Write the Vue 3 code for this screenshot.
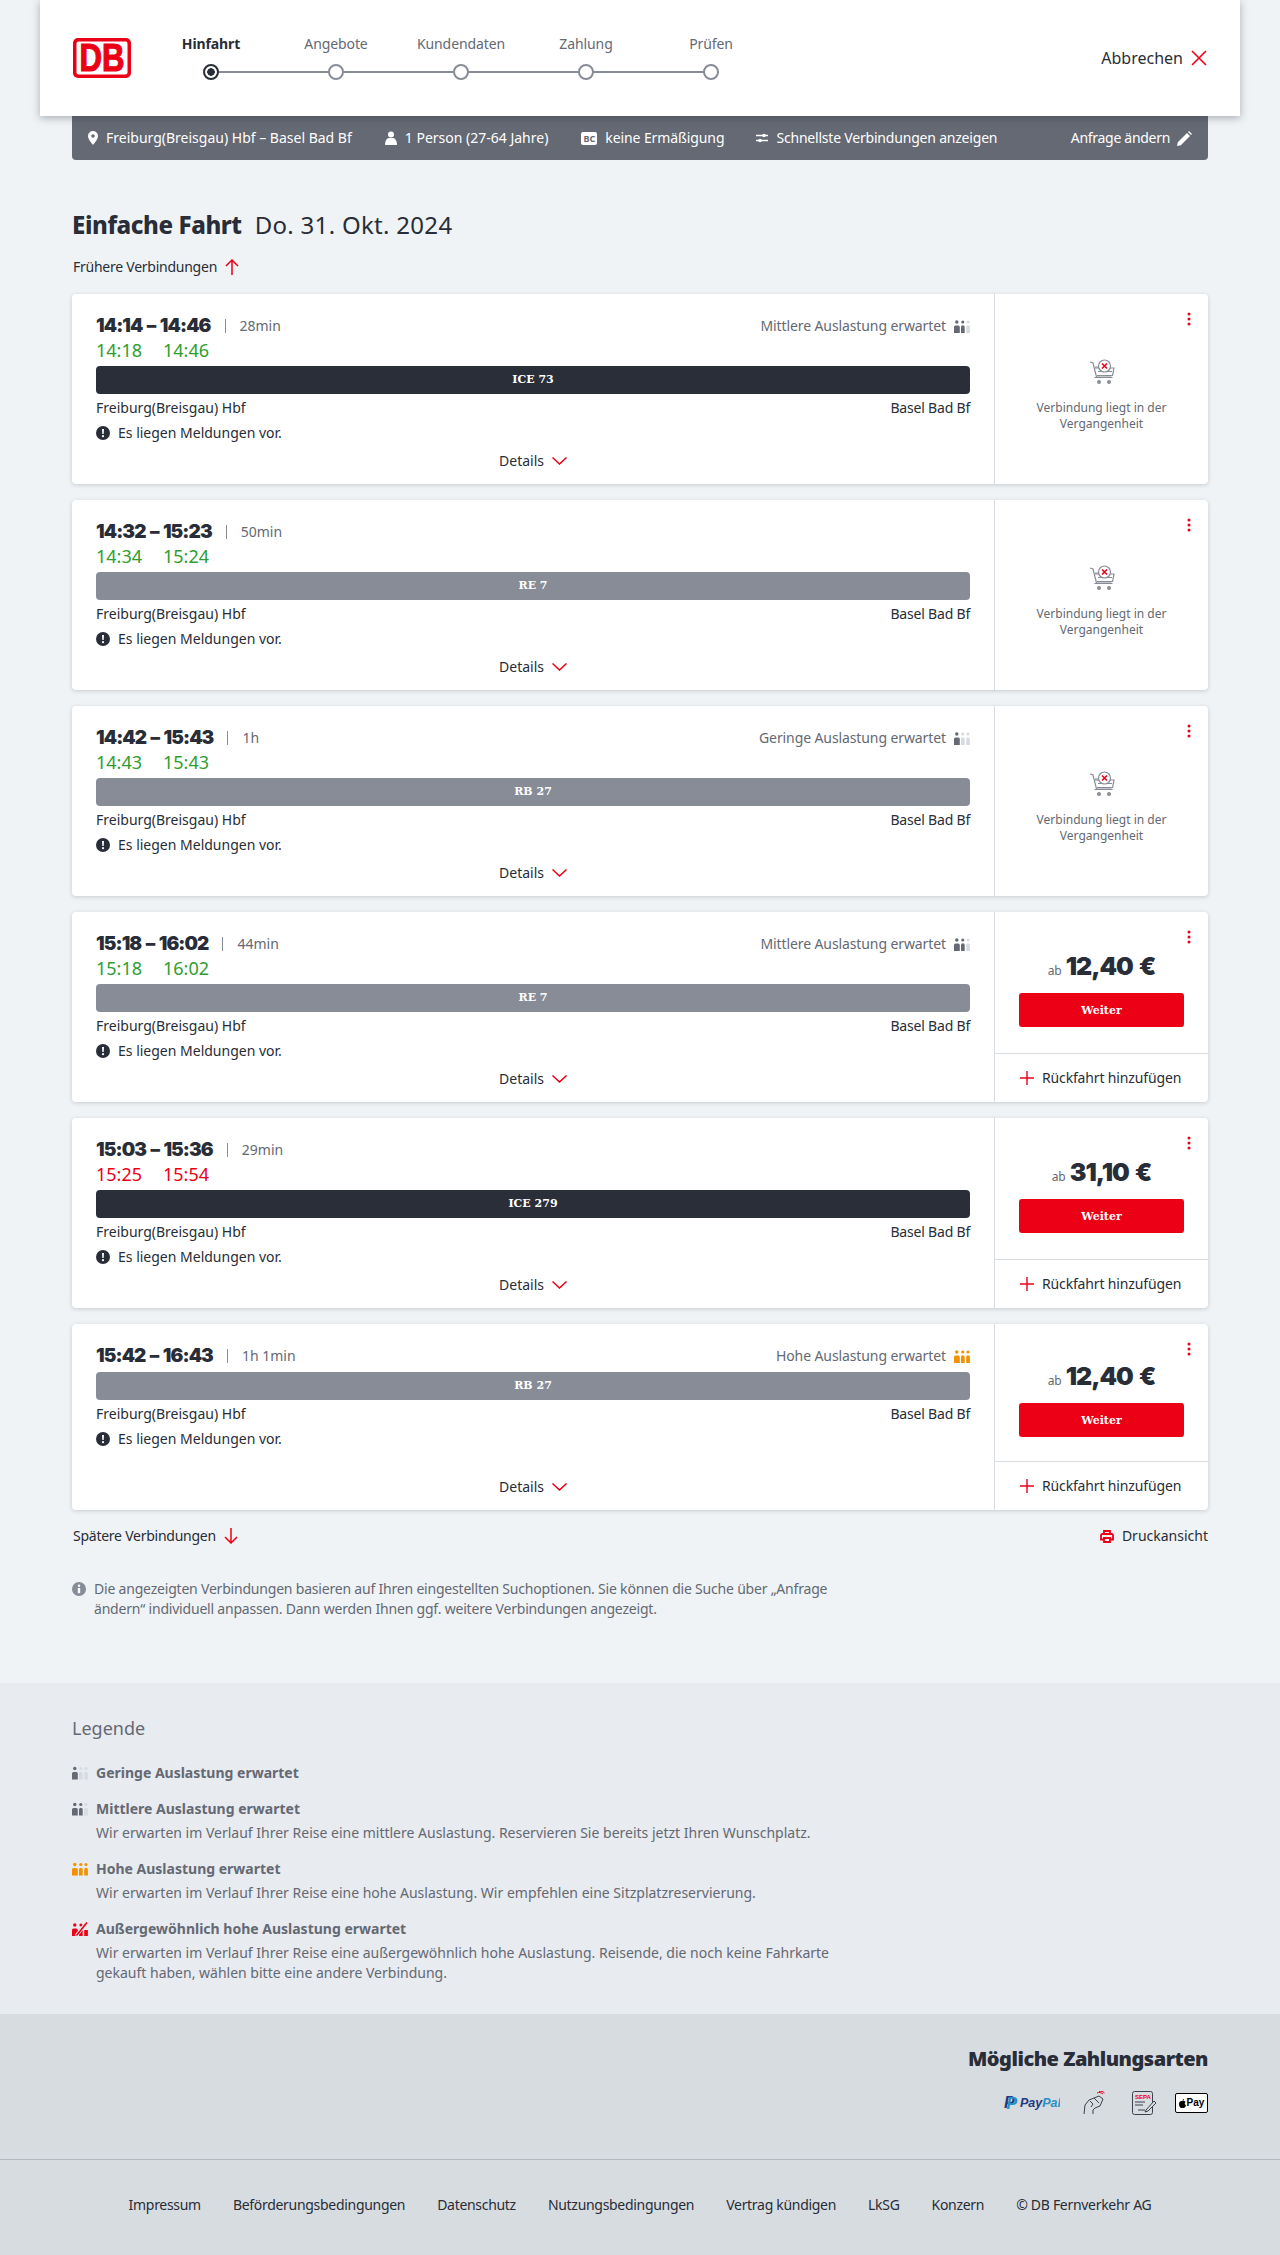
<template>
  <div class="page">
    <svg class="sprite" aria-hidden="true">
      <symbol id="occ-1" viewBox="0 0 16 13">
        <circle cx="2.8" cy="2" r="1.7" fill="#646973" /><path d="M0 7a1.5 1.5 0 0 1 1.5-1.5h2.8A1.5 1.5 0 0 1 5.8 7v6H0z" fill="#646973" />
        <circle cx="8.8" cy="2" r="1.6" fill="#d7dce1" /><path d="M7 7a1.5 1.5 0 0 1 3.7 0v6H7z" fill="#d7dce1" />
        <circle cx="14" cy="2" r="1.6" fill="#d7dce1" /><path d="M12.2 7a1.5 1.5 0 0 1 3.7 0v6h-3.7z" fill="#d7dce1" />
      </symbol>
      <symbol id="occ-2" viewBox="0 0 16 13">
        <circle cx="2.8" cy="2" r="1.7" fill="#646973" /><path d="M0 7a1.5 1.5 0 0 1 1.5-1.5h2.8A1.5 1.5 0 0 1 5.8 7v6H0z" fill="#646973" />
        <circle cx="8.8" cy="2" r="1.6" fill="#646973" /><path d="M7 7a1.5 1.5 0 0 1 3.7 0v6H7z" fill="#646973" />
        <circle cx="14" cy="2" r="1.6" fill="#d7dce1" /><path d="M12.2 7a1.5 1.5 0 0 1 3.7 0v6h-3.7z" fill="#d7dce1" />
      </symbol>
      <symbol id="occ-3" viewBox="0 0 16 13">
        <circle cx="2.8" cy="2" r="1.7" fill="#f39200" /><path d="M0 7a1.5 1.5 0 0 1 1.5-1.5h2.8A1.5 1.5 0 0 1 5.8 7v6H0z" fill="#f39200" />
        <circle cx="8.8" cy="2" r="1.6" fill="#f39200" /><path d="M7 7a1.5 1.5 0 0 1 3.7 0v6H7z" fill="#f39200" />
        <circle cx="14" cy="2" r="1.6" fill="#f39200" /><path d="M12.2 7a1.5 1.5 0 0 1 3.7 0v6h-3.7z" fill="#f39200" />
      </symbol>
      <symbol id="occ-4" viewBox="0 0 16 14">
        <circle cx="2.8" cy="3" r="1.7" fill="#ec0016" /><path d="M0 8a1.5 1.5 0 0 1 1.5-1.5h2.8A1.5 1.5 0 0 1 5.8 8v6H0z" fill="#ec0016" />
        <circle cx="9" cy="3" r="1.6" fill="#ec0016" /><path d="M7 14V8a1.5 1.5 0 0 1 3.7 0v6z" fill="#ec0016" />
        <path d="M12.2 8h3.7v6h-3.7z" fill="#ec0016" />
        <path d="M4 14 15 0" stroke="#e8ebf0" stroke-width="3.4" /><path d="M4.5 13.5 15 .5" stroke="#ec0016" stroke-width="1.6" />
      </symbol>
    </svg>

    <header class="top">
      <svg class="logo" width="58" height="40" viewBox="0 0 58 40">
        <rect x="0" y="0" width="58" height="40" rx="5" fill="#ec0016" />
        <rect x="3.500" y="3.500" width="51" height="33" rx="2" fill="#fff" />
        <text x="29" y="33" text-anchor="middle" textLength="45" lengthAdjust="spacingAndGlyphs" font-family="Liberation Sans" font-weight="700" font-size="38" stroke="#ec0016" stroke-width="1.200" fill="#ec0016">DB</text>
      </svg>
      <ol class="steps">
        <li v-for="(step, i) in steps" :key="step" :class="['step', { 'step--active': i === 0 }]">
          <span class="step__label">{{ step }}</span>
          <span class="step__dot"></span>
        </li>
      </ol>
      <div class="cancel">
        Abbrechen
        <svg width="16" height="16" viewBox="0 0 16 16"><path d="M1 1l14 14M15 1 1 15" stroke="#ec0016" stroke-width="1.6" fill="none" /></svg>
      </div>
    </header>

    <div class="query">
      <span class="query__item query__item--route">
        <svg width="10" height="14" viewBox="0 0 10 14"><path fill-rule="evenodd" d="M5 0a5 5 0 0 1 5 5c0 3.4-3.4 6.8-5 9C3.400 11.800 0 8.400 0 5a5 5 0 0 1 5-5zm0 3.200a1.800 1.800 0 1 0 0 3.600 1.800 1.800 0 0 0 0-3.600z" fill="#fff" /></svg>
        Freiburg(Breisgau) Hbf – Basel Bad Bf
      </span>
      <span class="query__item query__item--person">
        <svg width="12" height="14" viewBox="0 0 12 14"><circle cx="6" cy="3.500" r="3" fill="#fff" /><path d="M0 14c0-4 1.500-6.500 3.500-7h5c2 .5 3.500 3 3.500 7z" fill="#fff" /></svg>
        1 Person (27-64 Jahre)
      </span>
      <span class="query__item query__item--card">
        <span class="bc">BC</span>
        keine Ermäßigung
      </span>
      <span class="query__item query__item--fast">
        <svg width="12" height="10" viewBox="0 0 12 10"><path d="M0 2.500h12M0 7.500h12" stroke="#fff" stroke-width="1.400" /><circle cx="8" cy="2.500" r="1.800" fill="#fff" /><circle cx="4" cy="7.500" r="1.800" fill="#fff" /></svg>
        Schnellste Verbindungen anzeigen
      </span>
      <span class="query__edit">
        Anfrage ändern
        <svg width="15" height="15" viewBox="0 0 15 15"><path d="M0 15l.8-3.800L10 2l3 3-9.200 9.200zM11 1l1-1 3 3-1 1z" fill="#fff" /></svg>
      </span>
    </div>

    <main class="content">
      <h1 class="title"><strong>Einfache Fahrt</strong><span>Do. 31. Okt. 2024</span></h1>
      <div class="nav-link nav-link--first">
        Frühere Verbindungen
        <svg width="14" height="16" viewBox="0 0 14 16"><path d="M7 16V1M1 7l6-6 6 6" stroke="#ec0016" stroke-width="1.500" fill="none" /></svg>
      </div>

      <section class="list">
        <article v-for="c in connections" :key="c.time" :class="['card', { 'card--delays': c.delays }]">
          <div class="card__main">
            <div class="card__head">
              <strong class="card__time">{{ c.time }}</strong>
              <span class="card__sep"></span>
              <span class="card__duration">{{ c.duration }}</span>
              <span v-if="c.occ" class="card__occ">
                {{ c.occ }}
                <svg width="16" height="13"><use :href="`#occ-${c.occLevel}`" /></svg>
              </span>
            </div>
            <div v-if="c.delays" :class="['card__delays', { 'card__delays--late': c.late }]">
              <span>{{ c.delays[0] }}</span><span>{{ c.delays[1] }}</span>
            </div>
            <div :class="['card__bar', { 'card__bar--dark': c.dark }]">{{ c.train }}</div>
            <div class="card__stations"><span>Freiburg(Breisgau) Hbf</span><span class="card__dest">Basel Bad Bf</span></div>
            <div class="card__msg">
              <svg width="14" height="14" viewBox="0 0 14 14"><circle cx="7" cy="7" r="7" fill="#282d37" /><path d="M6 3h2l-.3 5H6.300z" fill="#fff" /><circle cx="7" cy="10.200" r="1.100" fill="#fff" /></svg>
              Es liegen Meldungen vor.
            </div>
            <div class="card__details">
              Details
              <svg width="15" height="8" viewBox="0 0 15 8"><path d="M.5.5l7 6.500 7-6.500" stroke="#ec0016" stroke-width="1.500" fill="none" /></svg>
            </div>
          </div>

          <div class="card__side">
            <svg class="card__more" width="4" height="14" viewBox="0 0 4 14"><circle cx="2" cy="2" r="1.500" fill="#ec0016" /><circle cx="2" cy="7" r="1.500" fill="#ec0016" /><circle cx="2" cy="12" r="1.500" fill="#ec0016" /></svg>
            <div v-if="!c.price" class="past">
              <svg width="26" height="26" viewBox="0 0 26 26">
                <path d="M1 3l3 1 3.500 14h15M6 8h3M5.500 18.500h18" stroke="#878c96" stroke-width="1.200" fill="none" />
                <path d="M6 9h5M20 9h5l-1.500 7.500H8M9 12.500h14" stroke="#878c96" stroke-width="1.200" fill="none" />
                <circle cx="15.500" cy="7" r="6" fill="#fff" stroke="#878c96" stroke-width="1.200" />
                <path d="M13 4.500l5 5M18 4.500l-5 5" stroke="#ec0016" stroke-width="1.600" />
                <circle cx="10" cy="23" r="2" fill="#878c96" /><circle cx="20" cy="23" r="2" fill="#878c96" />
              </svg>
              <p>Verbindung liegt in der Vergangenheit</p>
            </div>
            <template v-else>
              <div class="offer">
                <div class="offer__price"><small>ab</small><strong>{{ c.price }}</strong></div>
                <button class="offer__btn">Weiter</button>
              </div>
              <div class="return">
                <svg width="14" height="14" viewBox="0 0 14 14"><path d="M7 0v14M0 7h14" stroke="#ec0016" stroke-width="1.400" /></svg>
                Rückfahrt hinzufügen
              </div>
            </template>
          </div>
        </article>
      </section>

      <div class="after">
        <div class="nav-link">
          Spätere Verbindungen
          <svg width="14" height="16" viewBox="0 0 14 16"><path d="M7 0v15M1 9l6 6 6-6" stroke="#ec0016" stroke-width="1.500" fill="none" /></svg>
        </div>
        <div class="print">
          <svg width="14" height="13" viewBox="0 0 14 13" fill="none" stroke="#ec0016" stroke-width="1.800"><path d="M3.500 9.500H1V5.500A1.500 1.500 0 0 1 2.500 4h9A1.500 1.500 0 0 1 13 5.500v4h-2.500M4 4V1h6v3M4 8h6v4H4z" /></svg>
          Druckansicht
        </div>
      </div>

      <div class="info">
        <svg width="14" height="14" viewBox="0 0 14 14"><circle cx="7" cy="7" r="7" fill="#878c96" /><circle cx="7" cy="3.700" r="1.200" fill="#fff" /><path d="M5.800 6h2.400v5.200H5.800z" fill="#fff" /></svg>
        <p>Die angezeigten Verbindungen basieren auf Ihren eingestellten Suchoptionen. Sie können die Suche über „Anfrage ändern“ individuell anpassen. Dann werden Ihnen ggf. weitere Verbindungen angezeigt.</p>
      </div>
    </main>

    <section class="legend">
      <h2>Legende</h2>
      <div v-for="item in legend" :key="item.title" class="legend__item">
        <div class="legend__title">
          <svg width="16" height="14"><use :href="`#occ-${item.level}`" /></svg>
          {{ item.title }}
        </div>
        <p v-if="item.text">{{ item.text }}</p>
      </div>
    </section>

    <section class="pay">
      <h2>Mögliche Zahlungsarten</h2>
      <div class="pay__icons">
        <svg class="pay__paypal" width="56" height="18" viewBox="0 0 56 18">
          <text x="0" y="14" font-family="Liberation Sans" font-weight="700" font-style="italic" font-size="16" fill="#1f3a82">P</text>
          <text x="2.500" y="15" font-family="Liberation Sans" font-weight="700" font-style="italic" font-size="16" fill="#2790c3">P</text>
          <text x="16" y="13" font-family="Liberation Sans" font-weight="700" font-style="italic" font-size="12.500" fill="#1f3a82">Pay<tspan fill="#2790c3">Pal</tspan></text>
        </svg>
        <svg class="pay__hand" width="22" height="24" viewBox="0 0 22 24" fill="none" stroke="#3c414b" stroke-width="1">
          <path d="M1 23l1-9 4-5 10-4 4 3-3 7-5 2-2 2v4M7 10l3 3-2 3M11 7l5 5" />
          <path d="M14 2c2-1 4-.5 6 1M16 .5c2-.5 4 0 5.500 1.500" stroke="#ec0016" />
        </svg>
        <svg class="pay__sepa" width="25" height="24" viewBox="0 0 25 24">
          <rect x=".5" y=".5" width="20" height="23" rx="2" fill="none" stroke="#3c414b" />
          <text x="3" y="8" font-family="Liberation Sans" font-weight="700" font-size="6" fill="#ec0016">SEPA</text>
          <path d="M3 11h10M3 14h8M6 19h7" stroke="#3c414b" />
          <path d="M14 19l8-9 2 2-8 8-3 1z" fill="#d7dce1" stroke="#3c414b" />
        </svg>
        <span class="applepay"><svg width="7" height="9" viewBox="0 0 7 9"><path d="M3.500 2.200C4 1.900 4.800 1.800 5.500 2.100c.5.200.9.500 1.100.9-1.300.8-1.100 2.600.4 3.200C6.600 7.400 5.800 9 4.800 9c-.5 0-.8-.3-1.300-.3S2.700 9 2.200 9C1.200 9 0 7 0 5c0-2.100 1.400-3.200 2.500-3 .4 0 .7.200 1 .2zM3.500 1.800C3.400.9 4.200 0 5.100 0c.1 1-.7 1.900-1.600 1.800z" fill="#000" /></svg>Pay</span>
      </div>
    </section>

    <footer class="foot">
      <a v-for="link in footerLinks" :key="link">{{ link }}</a>
    </footer>
  </div>
</template>

<script setup>
const steps = ['Hinfahrt', 'Angebote', 'Kundendaten', 'Zahlung', 'Prüfen']

const connections = [
  { time: '14:14 – 14:46', duration: '28min', delays: ['14:18', '14:46'], occ: 'Mittlere Auslastung erwartet', occLevel: 2, train: 'ICE 73', dark: true },
  { time: '14:32 – 15:23', duration: '50min', delays: ['14:34', '15:24'], train: 'RE 7' },
  { time: '14:42 – 15:43', duration: '1h', delays: ['14:43', '15:43'], occ: 'Geringe Auslastung erwartet', occLevel: 1, train: 'RB 27' },
  { time: '15:18 – 16:02', duration: '44min', delays: ['15:18', '16:02'], occ: 'Mittlere Auslastung erwartet', occLevel: 2, train: 'RE 7', price: '12,40 €' },
  { time: '15:03 – 15:36', duration: '29min', delays: ['15:25', '15:54'], late: true, train: 'ICE 279', dark: true, price: '31,10 €' },
  { time: '15:42 – 16:43', duration: '1h 1min', occ: 'Hohe Auslastung erwartet', occLevel: 3, train: 'RB 27', price: '12,40 €' }
]

const legend = [
  { level: 1, title: 'Geringe Auslastung erwartet' },
  { level: 2, title: 'Mittlere Auslastung erwartet', text: 'Wir erwarten im Verlauf Ihrer Reise eine mittlere Auslastung. Reservieren Sie bereits jetzt Ihren Wunschplatz.' },
  { level: 3, title: 'Hohe Auslastung erwartet', text: 'Wir erwarten im Verlauf Ihrer Reise eine hohe Auslastung. Wir empfehlen eine Sitzplatzreservierung.' },
  { level: 4, title: 'Außergewöhnlich hohe Auslastung erwartet', text: 'Wir erwarten im Verlauf Ihrer Reise eine außergewöhnlich hohe Auslastung. Reisende, die noch keine Fahrkarte gekauft haben, wählen bitte eine andere Verbindung.' }
]

const footerLinks = ['Impressum', 'Beförderungsbedingungen', 'Datenschutz', 'Nutzungsbedingungen', 'Vertrag kündigen', 'LkSG', 'Konzern', '© DB Fernverkehr AG']
</script>

<style>
body {
  background: #eff3f6;
}
</style>

<style scoped>
.page {
  font-family: "Noto Sans", "Open Sans", sans-serif;
  font-size: 14px;
  line-height: 20px;
  color: #282d37;
  background: #eff3f6;
}

.sprite {
  display: none;
}

.top {
  position: relative;
  z-index: 2;
  display: flex;
  align-items: flex-start;
  height: 116px;
  margin: 0 40px;
  padding-left: 33px;
  background: #fff;
  box-shadow: 0 2px 8px rgba(40, 45, 55, 0.35);
}

.logo {
  margin-top: 38px;
  flex: none;
}

.steps {
  display: flex;
  margin: 34px 0 0 17.500px;
  padding: 0;
  list-style: none;
}

.step {
  position: relative;
  display: flex;
  flex-direction: column;
  align-items: center;
  width: 125px;
  color: #646973;
  letter-spacing: -0.1px;
}

.step__label {
  height: 20px;
}

.step__dot {
  position: relative;
  z-index: 1;
  box-sizing: border-box;
  width: 16px;
  height: 16px;
  margin-top: 10px;
  border: 2px solid #878c96;
  border-radius: 50%;
  background: #fff;
}

.step:not(:last-child)::after {
  content: '';
  position: absolute;
  top: 37px;
  left: 50%;
  width: 125px;
  height: 2px;
  background: #878c96;
}

.step--active {
  color: #282d37;
  font-weight: 700;
}

.step--active .step__dot {
  border-color: #282d37;
  background: radial-gradient(circle, #282d37 0 3.500px, #fff 4px);
}

.cancel {
  display: flex;
  align-items: center;
  gap: 8px;
  margin: 48px 33px 0 auto;
  font-size: 16px;
}

.query {
  display: flex;
  align-items: center;
  height: 44px;
  margin: 0 72px;
  padding: 0 16px;
  border-radius: 0 0 4px 4px;
  background: #646973;
  color: #fff;
}

.query__item {
  display: flex;
  align-items: center;
  gap: 8px;
}

.query__item--person {
  margin-left: 33px;
}

.query__item--card {
  margin-left: 33px;
  letter-spacing: -0.1px;
}

.query__item--fast {
  margin-left: 32px;
  letter-spacing: -0.2px;
}

.bc {
  box-sizing: border-box;
  width: 16px;
  height: 13px;
  border-radius: 2px;
  background: #fff;
  color: #646973;
  font-size: 9px;
  font-weight: 700;
  line-height: 13px;
  text-align: center;
}

.query__edit {
  display: flex;
  align-items: center;
  gap: 7px;
  margin-left: auto;
  letter-spacing: -0.3px;
}

.content {
  padding: 49px 72px 64px;
}

.title {
  display: flex;
  gap: 13px;
  margin: 0;
  font-size: 24px;
  font-weight: 400;
  line-height: 32px;
}

.title strong {
  font-weight: 800;
  letter-spacing: -0.4px;
}

.title span {
  letter-spacing: 0.3px;
}

.nav-link {
  display: flex;
  align-items: center;
  gap: 8px;
  padding-left: 1px;
  letter-spacing: -0.25px;
}

.nav-link--first {
  margin-top: 16px;
}

.list {
  display: flex;
  flex-direction: column;
  gap: 16px;
  margin-top: 17px;
}

.card {
  display: flex;
  min-height: 186px;
  border-radius: 4px;
  background: #fff;
  box-shadow: 0 1px 4px rgba(40, 45, 55, 0.2);
}

.card--delays {
  min-height: 190px;
}

.card__main {
  display: flex;
  flex: 1;
  flex-direction: column;
  min-width: 0;
  padding: 22px 24px 13px;
}

.card__head {
  display: flex;
  align-items: center;
  height: 20px;
}

.card__time {
  font-family: Inter, sans-serif;
  font-size: 19px;
  font-weight: 900;
  letter-spacing: -0.9px;
  word-spacing: 1.500px;
}

.card__sep {
  width: 1px;
  height: 14px;
  margin: 0 14px;
  background: #878c96;
}

.card__duration {
  color: #646973;
}

.card__occ {
  display: flex;
  align-items: center;
  gap: 8px;
  margin-left: auto;
  color: #646973;
  letter-spacing: -0.1px;
}

.card__delays {
  display: flex;
  gap: 21px;
  height: 22px;
  margin-top: 2px;
  color: #2f9e2f;
  font-size: 18px;
  line-height: 24px;
}

.card__delays--late {
  color: #ec0016;
}

.card__bar {
  height: 28px;
  margin-top: 6px;
  border-radius: 4px;
  background: #878c96;
  color: #fff;
  font-family: "DejaVu Serif", serif;
  font-size: 11px;
  font-weight: 700;
  line-height: 28px;
  text-align: center;
}

.card__bar--dark {
  background: #2a2e39;
}

.card__stations {
  display: flex;
  justify-content: space-between;
  margin-top: 4px;
}

.card__dest {
  letter-spacing: -0.2px;
}

.card__msg {
  display: flex;
  align-items: center;
  gap: 8px;
  margin-top: 5px;
}

.card__details {
  display: flex;
  align-items: center;
  justify-content: center;
  gap: 8px;
  margin-top: auto;
}

.card__side {
  position: relative;
  display: flex;
  flex: none;
  flex-direction: column;
  width: 213px;
  border-left: 1px solid #d7dce1;
}

.card__more {
  position: absolute;
  top: 18px;
  right: 17px;
}

.past {
  display: flex;
  flex-direction: column;
  align-items: center;
  padding: 65px 24px 0;
  color: #646973;
  text-align: center;
}

.past p {
  margin: 15px 0 0;
  font-size: 12px;
  line-height: 16px;
}

.offer {
  display: flex;
  flex: 1;
  flex-direction: column;
  justify-content: center;
  padding: 12px 24px 0;
}

.offer__price {
  display: flex;
  align-items: baseline;
  justify-content: center;
  gap: 4px;
  height: 32px;
  line-height: 32px;
}

.offer__price small {
  color: #646973;
  font-size: 12px;
}

.offer__price strong {
  font-family: Inter, sans-serif;
  font-size: 25px;
  font-weight: 900;
  letter-spacing: -1px;
  word-spacing: 2px;
}

.offer__btn {
  height: 34px;
  margin-top: 11px;
  border: 0;
  border-radius: 3px;
  background: #ec0016;
  color: #fff;
  font-family: "DejaVu Serif", serif;
  font-size: 11px;
  font-weight: 700;
}

.return {
  display: flex;
  align-items: center;
  gap: 8px;
  height: 48px;
  padding-left: 25px;
  border-top: 1px solid #d7dce1;
  letter-spacing: -0.15px;
}

.after {
  display: flex;
  align-items: center;
  justify-content: space-between;
  margin-top: 16px;
}

.print {
  display: flex;
  align-items: center;
  gap: 8px;
}

.info {
  display: flex;
  gap: 8px;
  width: 770px;
  margin-top: 33px;
  color: #646973;
  letter-spacing: -0.2px;
}

.info svg {
  flex: none;
  margin-top: 3px;
}

.info p {
  margin: 0;
}

.legend {
  padding: 33px 72px 31px;
  background: #e8ebf0;
  color: #646973;
}

.legend h2 {
  margin: 0 0 23px;
  font-size: 18px;
  font-weight: 400;
  line-height: 24px;
}

.legend__item {
  padding-left: 24px;
  margin-top: 16px;
}

.legend__title {
  position: relative;
  font-weight: 700;
}

.legend__title svg {
  position: absolute;
  top: 3px;
  left: -24px;
}

.legend__item p {
  width: 760px;
  margin: 4px 0 0;
}

.pay {
  padding: 31px 72px 42px;
  border-bottom: 1px solid #b4b9bf;
  background: #d7dce1;
  text-align: right;
}

.pay h2 {
  margin: 0;
  color: #282d37;
  font-size: 20px;
  font-weight: 900;
  letter-spacing: -0.5px;
  line-height: 28px;
}

.pay__icons {
  display: flex;
  align-items: center;
  justify-content: flex-end;
  height: 28px;
  margin-top: 16px;
}

.pay__hand {
  margin-left: 23px;
}

.pay__sepa {
  margin-left: 27px;
}

.applepay {
  display: flex;
  align-items: center;
  justify-content: center;
  gap: 1px;
  box-sizing: border-box;
  width: 33px;
  height: 20px;
  margin-left: 18px;
  border: 1px solid #000;
  border-radius: 2px;
  background: #fff;
  color: #000;
  font-family: "Liberation Sans", sans-serif;
  font-size: 10px;
  font-weight: 700;
}

.foot {
  display: flex;
  justify-content: center;
  gap: 32px;
  padding: 35px 0 41px;
  background: #d7dce1;
  letter-spacing: -0.3px;
}
</style>
